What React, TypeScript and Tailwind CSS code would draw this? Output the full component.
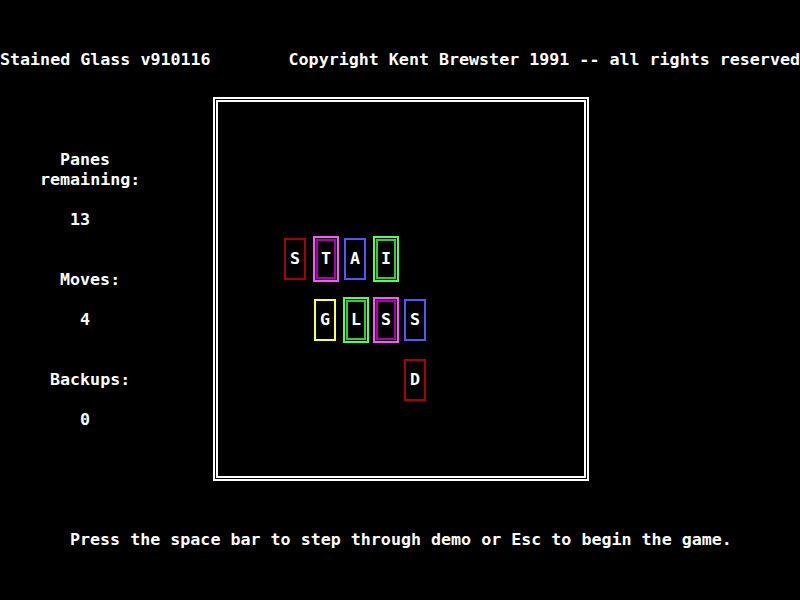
type Tile = {
  ch: string;
  col: number;
  row: number;
  kind: "single" | "double";
  outer: string;
  inner?: string;
};

const tiles: Tile[] = [
  { ch: "S", col: 0, row: 0, kind: "single", outer: "border-[#aa0000]" },
  { ch: "T", col: 1, row: 0, kind: "double", outer: "border-[#ff55ff]", inner: "border-[#aa00aa]" },
  { ch: "A", col: 2, row: 0, kind: "single", outer: "border-[#5555ff]" },
  { ch: "I", col: 3, row: 0, kind: "double", outer: "border-[#55ff55]", inner: "border-[#33cc33]" },
  { ch: "G", col: 1, row: 1, kind: "single", outer: "border-[#ffff55]" },
  { ch: "L", col: 2, row: 1, kind: "double", outer: "border-[#55ff55]", inner: "border-[#33cc33]" },
  { ch: "S", col: 3, row: 1, kind: "double", outer: "border-[#ff55ff]", inner: "border-[#aa00aa]" },
  { ch: "S", col: 4, row: 1, kind: "single", outer: "border-[#5555ff]" },
  { ch: "D", col: 4, row: 2, kind: "single", outer: "border-[#aa0000]" },
];

// row tops inside the board (relative to padding box of outer frame)
const rowTops = [139, 200, 260];

function Pane({ t }: { t: Tile }) {
  const left = 69 + t.col * 30;
  const top = rowTops[t.row];
  if (t.kind === "single") {
    return (
      <div
        className={`absolute w-[22px] h-[42px] border-2 ${t.outer} flex items-center justify-center`}
        style={{ left, top }}
      >
        {t.ch}
      </div>
    );
  }
  return (
    <div
      className={`absolute w-[26px] h-[46px] border-2 ${t.outer} p-px`}
      style={{ left: left - 1, top: top - 2 }}
    >
      <div className={`w-full h-full border-2 ${t.inner} flex items-center justify-center`}>
        {t.ch}
      </div>
    </div>
  );
}

export default function App() {
  return (
    <div
      className="w-[800px] h-[600px] bg-black text-white font-bold text-[16.67px] leading-[20px] whitespace-pre overflow-hidden flex flex-col pt-[50px]"
      style={{ fontFamily: '"DejaVu Sans Mono", "Liberation Mono", monospace' }}
    >
      <div className="flex justify-between h-5">
        <span>Stained Glass v910116</span>
        <span>Copyright Kent Brewster 1991 -- all rights reserved</span>
      </div>

      <div className="flex mt-[27px]">
        <div className="w-[213px] flex flex-col pt-[53px]">
          <div className="h-5 pl-[60px]">Panes</div>
          <div className="h-5 pl-[40px]">remaining:</div>
          <div className="h-5" />
          <div className="h-5 pl-[70px]">13</div>
          <div className="h-10" />
          <div className="h-5 pl-[60px]">Moves:</div>
          <div className="h-5" />
          <div className="h-5 pl-[80px]">4</div>
          <div className="h-10" />
          <div className="h-5 pl-[50px]">Backups:</div>
          <div className="h-5" />
          <div className="h-5 pl-[80px]">0</div>
        </div>

        <div className="relative w-[376px] h-[384px] border-2 border-white p-px">
          <div className="w-full h-full border-2 border-white" />
          {tiles.map((t, i) => (
            <Pane key={i} t={t} />
          ))}
        </div>
      </div>

      <div className="h-5 mt-[49px] pl-[70px]">
        Press the space bar to step through demo or Esc to begin the game.
      </div>
    </div>
  );
}
